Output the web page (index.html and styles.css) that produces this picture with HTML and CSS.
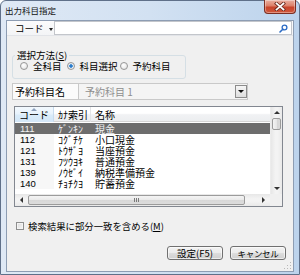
FILE: index.html
```html
<!DOCTYPE html>
<html lang="ja">
<head>
<meta charset="utf-8">
<link rel="stylesheet" href="styles.css">
</head>
<body>
<div class="window">
  <div class="titlebar">
    <span class="title">出力科目指定</span>
    <div class="close">
      <svg width="12" height="9" viewBox="0 0 12 9"><path d="M2.5 1.5 L9.5 7.5 M9.5 1.5 L2.5 7.5" stroke="#6a2a1e" stroke-width="3.4" stroke-linecap="square"/><path d="M2.5 1.5 L9.5 7.5 M9.5 1.5 L2.5 7.5" stroke="#ffffff" stroke-width="1.7" stroke-linecap="square"/></svg>
    </div>
  </div>
  <div class="client">
    <div class="toolbar">
      <div class="tb-btn"><span>コード</span><span class="caret"></span></div>
      <div class="search">
        <svg width="9" height="9" viewBox="0 0 9 9"><circle cx="5.5" cy="3.5" r="2.4" fill="none" stroke="#2b6bc4" stroke-width="1.3"/><path d="M3.8 5.2 L1 8" stroke="#2b6bc4" stroke-width="1.6" stroke-linecap="round"/></svg>
      </div>
    </div>

    <fieldset class="group">
      <legend>選択方法(<u>S</u>)</legend>
      <div class="radios">
        <span class="radio"></span><span class="rlabel r1">全科目</span>
        <span class="radio on"></span><span class="rlabel r2">科目選択</span>
        <span class="radio"></span><span class="rlabel">予約科目</span>
      </div>
    </fieldset>

    <div class="namerow">
      <div class="lbl">予約科目名</div>
      <div class="combo"><span class="ctext">予約科目 1</span><span class="drop"><span class="dcaret"></span></span></div>
    </div>

    <div class="list">
      <div class="lmain">
        <div class="lhead">
          <div class="hc hot">コード<span class="sort"></span></div>
          <div class="hc">ｶﾅ索引</div>
          <div class="hc last">名称</div>
        </div>
        <div class="rows">
          <div class="row sel"><span class="num">111</span><span>ｹﾞﾝｷﾝ</span><span>現金</span></div>
          <div class="row"><span class="num">112</span><span>ｺｸﾞﾁｹ</span><span>小口現金</span></div>
          <div class="row"><span class="num">121</span><span>ﾄｳｻﾞﾖ</span><span>当座預金</span></div>
          <div class="row"><span class="num">131</span><span>ﾌﾂｳﾖｷ</span><span>普通預金</span></div>
          <div class="row"><span class="num">139</span><span>ﾉｳｾﾞｲ</span><span>納税準備預金</span></div>
          <div class="row"><span class="num">140</span><span>ﾁｮﾁｸﾖ</span><span>貯蓄預金</span></div>
        </div>
      </div>
      <div class="vscroll">
        <div class="sbtn"><span class="tri up"></span></div>
        <div class="vthumb"></div>
        <div class="vtrack"></div>
        <div class="sbtn"><span class="tri down"></span></div>
      </div>
      <div class="hscroll">
        <div class="hbtn"><span class="tri left"></span></div>
        <div class="htrack"><div class="hthumb"><span class="gripl"></span></div></div>
        <div class="hbtn"><span class="tri right"></span></div>
      </div>
      <div class="corner"></div>
    </div>

    <div class="checkrow">
      <span class="cbox"></span><span class="clabel">検索結果に部分一致を含める(<u>M</u>)</span>
    </div>

    <div class="buttons">
      <div class="btn">設定(F5)</div>
      <div class="btn cancel">キャンセル</div>
    </div>

    <svg class="sizegrip" width="8" height="8" viewBox="0 0 8 8">
      <rect x="6" y="0" width="1" height="1" fill="#b8b8b8"/>
      <rect x="3" y="3" width="1" height="1" fill="#b8b8b8"/><rect x="6" y="3" width="1" height="1" fill="#b8b8b8"/>
      <rect x="0" y="6" width="1" height="1" fill="#b8b8b8"/><rect x="3" y="6" width="1" height="1" fill="#b8b8b8"/><rect x="6" y="6" width="1" height="1" fill="#b8b8b8"/>
    </svg>
  </div>
</div>
</body>
</html>
```

FILE: styles.css
```css
* { box-sizing: border-box; }
html, body { margin: 0; padding: 0; }
body {
  width: 300px; height: 275px; overflow: hidden; background: #ffffff;
  font-family: "Noto Sans CJK JP", "Noto Sans", sans-serif;
  font-size: 10px; color: #000;
}
u { text-decoration: underline; text-underline-offset: 1px; }

.window {
  width: 300px; height: 275px;
  border: 1px solid #5f7089;
  border-radius: 6px 6px 0 0;
  background: linear-gradient(to right, #dfe9f5 0%, #d2e1f2 50%, #bcd3ec 100%);
  display: flex; flex-direction: column;
}
.titlebar {
  height: 19px; flex: none;
  display: flex; justify-content: space-between; align-items: flex-start;
  padding-left: 4px;
}
.title { font-size: 8.5px; line-height: 10px; margin-top: 4px; color: #111; }
.close {
  width: 32px; height: 14px; margin-top: -1px; margin-right: 3px;
  border: 1px solid #7b2e22; border-top: none;
  border-radius: 0 0 4px 4px;
  background: linear-gradient(#eab0a1 0%, #dc7f68 45%, #c8442b 55%, #d0593c 100%);
  display: flex; align-items: center; justify-content: center;
  box-shadow: inset 0 0 0 1px rgba(255,255,255,0.35);
}
.client {
  flex: 1; position: relative;
  margin: 0 5px 2px 5px;
  border: 1px solid #8d9db3;
  background: #f0f0f0;
  display: flex; flex-direction: column;
}

/* toolbar */
.toolbar {
  height: 15px; flex: none;
  display: flex;
  background: linear-gradient(#fbfbfc, #f3f4f6);
  border-bottom: 1px solid #e2e4e8;
}
.tb-btn {
  width: 46px; display: flex; align-items: center; white-space: nowrap;
  padding-left: 8px; line-height: 13px; font-size: 9.5px;
}
.caret {
  width: 0; height: 0; margin-left: 5px; margin-top: 2px; flex: none;
  border-left: 2.5px solid transparent; border-right: 2.5px solid transparent;
  border-top: 3px solid #222;
}
.search {
  flex: 1; height: 14px; margin-left: 1px; margin-right: 1px;
  background: #fff; border: 1px solid #c3c6cb;
  display: flex; justify-content: flex-end; align-items: center;
  padding-right: 3px;
}

/* group box */
.group {
  margin: 14px 0 0 5px; width: 174px;
  padding: 1px 0 7px 2px;
  border: 1px solid #d5dfe5; border-radius: 3px;
  min-inline-size: 0;
}
.group legend { padding: 0 2px; font-size: 9.5px; line-height: 10px; }
.radios { display: flex; align-items: center; height: 10px; margin-left: 5px; white-space: nowrap; }
.radio {
  width: 8px; height: 8px; border-radius: 50%; flex: none;
  border: 1px solid #979797;
  background: radial-gradient(circle at 40% 35%, #ffffff 0%, #e9e9e9 70%, #d6d6d6 100%);
}
.radio.on {
  background: radial-gradient(circle, #1f6fc0 0%, #3c8ad3 35%, #e8eef5 50%, #dcdcdc 100%);
}
.rlabel { font-size: 9.5px; line-height: 10px; margin-left: 5px; }
.r1 { margin-right: 5px; }
.r2 { margin-right: 2px; }

/* name row */
.namerow { display: flex; height: 17px; margin: 4px 0 0 5px; flex: none; }
.lbl {
  width: 67px; border: 1px solid #c9c9c9; background: #fbfbfb;
  padding-left: 2px; line-height: 15px; font-size: 10px; white-space: nowrap;
}
.combo {
  width: 169px; border: 1px solid #c9c9c9; border-left: none;
  background: #f4f4f4;
  display: flex; align-items: center; justify-content: space-between;
  padding-left: 6px; padding-right: 0;
}
.ctext { color: #8e8e8e; font-size: 10px; line-height: 14px; }
.drop {
  width: 12px; height: 13px;
  border: 1px solid #8c8c8c;
  background: linear-gradient(#f6f6f6, #dedede);
  display: flex; align-items: center; justify-content: center;
}
.dcaret {
  width: 0; height: 0;
  border-left: 3px solid transparent; border-right: 3px solid transparent;
  border-top: 3px solid #111;
}

/* list */
.list {
  margin: 6px 0 0 7px; width: 269px; height: 101px; flex: none;
  border: 1px solid #828790; background: #fff;
  display: grid; grid-template-columns: 1fr 12px; grid-template-rows: 1fr 12px;
}
.lmain { overflow: hidden; }
.lhead {
  display: grid; grid-template-columns: 39px 37px 1fr; height: 15px;
  background: linear-gradient(#ffffff 0%, #ffffff 45%, #f1f2f4 55%, #eceef0 100%);
  border-bottom: 1px solid #d5d5d5;
}
.hc {
  position: relative; padding-left: 4px; line-height: 15px; font-size: 10px;
  border-right: 1px solid #e3e4e6; white-space: nowrap;
}
.hc.hot { background: linear-gradient(#f3f9fe 0%, #e8f3fc 45%, #d9ebf9 55%, #d3e7f8 100%); border-right-color: #c7dbee; }
.hc.last { border-right: none; }
.sort {
  position: absolute; left: 16px; top: 1px; width: 0; height: 0;
  border-left: 3px solid transparent; border-right: 3px solid transparent;
  border-bottom: 3px solid #8fa2bd;
}
.rows { padding-top: 1px; }
.row {
  display: grid; grid-template-columns: 39px 37px 1fr; height: 11px;
  line-height: 11px; font-size: 10px; white-space: nowrap;
}
.row span { padding-left: 4px; }
.row .num {
  padding-left: 5px; background: #f7f7f7;
  font-family: "Liberation Sans", sans-serif; font-size: 9.5px;
}
.row.sel { background: #6d6d6d; color: #f2f2f2; }
.row.sel .num { background: transparent; }

.vscroll {
  display: flex; flex-direction: column;
  background: linear-gradient(to right, #e7e7e7, #f3f3f3 40%, #f3f3f3 60%, #e9e9e9);
  border-left: 1px solid #ececec;
}
.sbtn { height: 11px; display: flex; align-items: center; justify-content: center; flex: none; }
.vthumb {
  height: 12px; flex: none; margin: 0 1px;
  border: 1px solid #9b9b9b; border-radius: 2px;
  background: linear-gradient(to right, #f4f4f4, #e7e7e7 50%, #d6d6d6 51%, #dadada);
}
.vtrack { flex: 1; }
.hscroll {
  display: flex;
  background: linear-gradient(#e7e7e7, #f3f3f3 40%, #f3f3f3 60%, #e9e9e9);
}
.hbtn { width: 13px; flex: none; display: flex; align-items: center; justify-content: center; }
.htrack { flex: 1; padding: 1px 0 1px 0; }
.hthumb {
  width: 217px; height: 100%;
  border: 1px solid #9b9b9b; border-radius: 2px;
  background: linear-gradient(#f4f4f4, #e9e9e9 50%, #d7d7d7 51%, #dcdcdc);
  display: flex; align-items: center; justify-content: center;
}
.gripl {
  width: 5px; height: 4px;
  background: repeating-linear-gradient(to right, #7a7a7a 0 1px, transparent 1px 2px);
}
.corner { background: #f0f0f0; }
.tri { width: 0; height: 0; }
.tri.up { border-left: 3px solid transparent; border-right: 3px solid transparent; border-bottom: 3px solid #333; }
.tri.down { border-left: 3px solid transparent; border-right: 3px solid transparent; border-top: 3px solid #333; }
.tri.left { border-top: 3px solid transparent; border-bottom: 3px solid transparent; border-right: 3px solid #333; }
.tri.right { border-top: 3px solid transparent; border-bottom: 3px solid transparent; border-left: 3px solid #333; }

/* checkbox */
.checkrow { display: flex; align-items: center; height: 10px; margin: 14px 0 0 9px; flex: none; white-space: nowrap; }
.cbox {
  width: 8px; height: 8px; flex: none;
  border: 1px solid #8e8f8f;
  background: linear-gradient(135deg, #dcdcdc, #f6f6f6);
  box-shadow: inset 0 0 0 1px #f4f4f4;
}
.clabel { margin-left: 4px; font-size: 9.4px; line-height: 10px; }

/* buttons */
.buttons {
  display: flex; justify-content: flex-end; gap: 7px;
  margin-top: 15px; padding-right: 7px; flex: none;
}
.btn {
  width: 56px; height: 14px; white-space: nowrap;
  border: 1px solid #707070; border-radius: 3px;
  background: linear-gradient(#f2f2f2 0%, #ebebeb 50%, #dddddd 51%, #cfcfcf 100%);
  box-shadow: inset 0 0 0 1px rgba(255,255,255,0.6);
  text-align: center; line-height: 12px; font-size: 9.5px;
}
.btn.cancel { font-size: 8.5px; letter-spacing: -0.3px; }
.sizegrip { position: absolute; right: 1px; bottom: 1px; }
```
